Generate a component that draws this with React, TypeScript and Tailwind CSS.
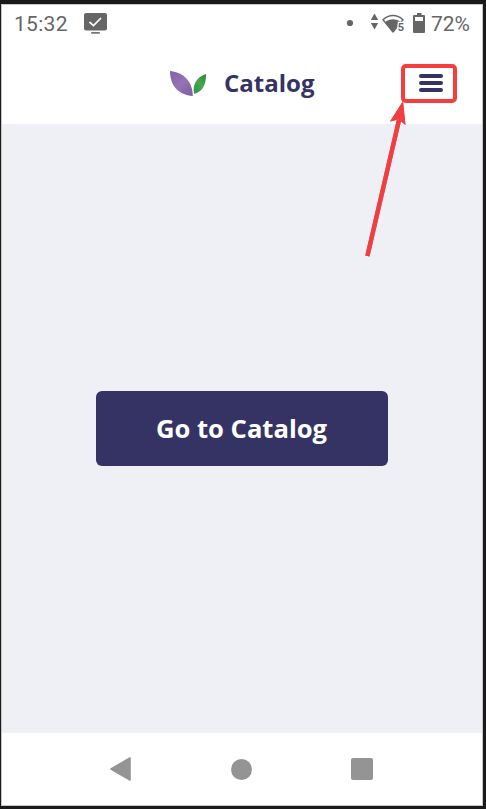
function TaskIcon() {
  return (
    <svg width="24" height="22" viewBox="0 0 24 22" className="ml-4">
      <rect x="0" y="0" width="23" height="17.4" rx="2" fill="#666" />
      <path d="M5.5 9 L9.5 12.6 L17 5" fill="none" stroke="#fff" strokeWidth="1.7" />
      <rect x="7" y="19" width="9" height="1.7" rx=".8" fill="#777" />
    </svg>
  );
}

function StatusIcons() {
  return (
    <svg width="82" height="24" viewBox="345 11 82 24" fill="#666">
      <circle cx="350" cy="22" r="3.1" />
      <path d="M370.8 19 L374.5 12.5 L378.2 19Z M370.8 22 L374.5 28.5 L378.2 22Z" />
      <path d="M383 18.8 C388.8 13 397.2 13 403 18.8 L393 31Z" fill="none" stroke="#666" strokeWidth="1.4" strokeLinejoin="round" />
      <path d="M385.3 21 C389.8 17.2 396.2 17.2 400.7 21 L393 31Z" />
      <text x="397.7" y="29.6" fontSize="11" fontWeight="700" fontFamily="Roboto, sans-serif" stroke="#fff" strokeWidth="2.4" paintOrder="stroke">5</text>
      <path d="M414.5 14 H417 V12 H421.5 V14 H424 Q425 14 425 15 V31 Q425 32 424 32 H414 Q413 32 413 31 V15 Q413 14 414 14Z" />
      <rect x="415" y="16" width="8" height="4" fill="#fff" />
    </svg>
  );
}

function Logo() {
  return (
    <svg width="38" height="27" viewBox="169 69 38 27" className="-mt-px">
      <defs>
        <linearGradient id="petal" x1="0" y1="0" x2="1" y2="1">
          <stop offset="0" stopColor="#8161a6" />
          <stop offset=".5" stopColor="#9673b5" />
          <stop offset="1" stopColor="#795c9d" />
        </linearGradient>
        <linearGradient id="leaf" x1="1" y1="0" x2="0" y2="1">
          <stop offset="0" stopColor="#28873d" />
          <stop offset=".5" stopColor="#46a74f" />
          <stop offset="1" stopColor="#329443" />
        </linearGradient>
      </defs>
      <path d="M170 70 C181 71 192.5 78 192.8 95 C178.5 94 170 85 170 70Z" fill="url(#petal)" />
      <path d="M206 73 C206.2 84 202.3 91 194 92.8 C192 83 197.5 75.5 206 73Z" fill="url(#leaf)" />
    </svg>
  );
}

export default function App() {
  return (
    <div className="relative flex h-[809px] w-[486px] flex-col bg-[#1b1a1b] pt-1 pr-[3px] pb-[3px] pl-px">
      <div className="flex flex-1 flex-col border border-[#c5c7c8] bg-white">
        <div className="flex h-[38px] items-center justify-between pr-3 pl-3 font-[Roboto,sans-serif] text-[21px] text-[#666]">
          <div className="flex items-center">
            <span className="pt-0.5 tracking-[0.3px]">15:32</span>
            <TaskIcon />
          </div>
          <div className="flex items-center">
            <StatusIcons />
            <span className="ml-1 pt-0.5">72%</span>
          </div>
        </div>
        <header className="flex h-[81px] items-center pl-[167px]">
          <Logo />
          <h1 className="ml-[17px] w-[177px] pb-0.5 font-['Open_Sans',sans-serif] text-2xl font-bold text-[#353363]">Catalog</h1>
          <button className="-mt-px flex h-[39px] w-[56px] flex-col items-center justify-center gap-[3.3px] rounded-[5px] border-4 border-[#f43d3f] pl-1 shadow-[0_0_1px_#9999]">
            <span className="h-1 w-6 rounded-full bg-[#353363]" />
            <span className="h-1 w-6 rounded-full bg-[#353363]" />
            <span className="h-1 w-6 rounded-full bg-[#353363]" />
          </button>
        </header>
        <main className="flex flex-1 flex-col items-center bg-[#eff0f6] pt-[267px]">
          <button className="h-[75px] w-[292px] rounded-md bg-[#353363] pt-0.5 pr-px font-['Open_Sans',sans-serif] text-[25.6px] font-bold text-white">
            Go to Catalog
          </button>
        </main>
        <nav className="flex h-[72px] items-center pl-[107px]">
          <svg width="22" height="26" viewBox="0 0 22 26" className="shrink-0">
            <path d="M2 13 L21 2 V24Z" fill="#949494" stroke="#949494" strokeWidth="1.6" strokeLinejoin="round" />
          </svg>
          <span className="ml-[100px] h-[21px] w-[21px] rounded-full bg-[#949494]" />
          <span className="ml-[98.5px] h-[22.5px] w-[22.5px] rounded-[2px] bg-[#949494]" />
        </nav>
      </div>
      <svg width="60" height="170" viewBox="355 95 60 170" className="absolute top-[95px] left-[355px] drop-shadow-[0_0_0.5px_#888]">
        <path d="M367.4 256 L399 120" stroke="#f43d3f" strokeWidth="4.4" />
        <path d="M403 101 L405.5 125 L398.5 119.5 L390 121.5Z" fill="#f43d3f" />
      </svg>
    </div>
  );
}
